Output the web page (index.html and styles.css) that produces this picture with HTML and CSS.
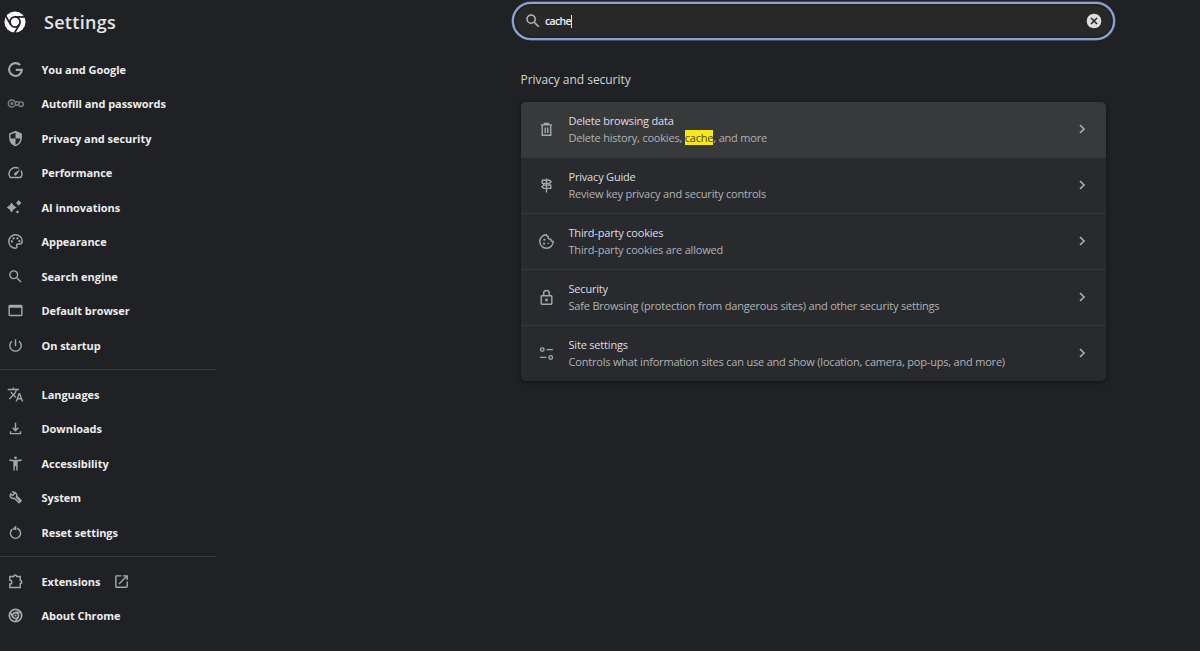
FILE: index.html
```
<!DOCTYPE html>
<html lang="en">
<head>
<meta charset="utf-8">
<title>Settings</title>
<link rel="stylesheet" href="styles.css">
</head>
<body>
<div class="app">
  <aside class="sidebar">
    <header class="brand">
      <svg class="logo" viewBox="0 0 24 24"><circle cx="12" cy="12" r="11.500" fill="#fff"/><g fill="none" stroke="#202124" stroke-width="1.900"><circle cx="12" cy="12" r="5.500"/><path d="M12 6.500h11.500"/><path d="M12 6.500h11.500" transform="rotate(120 12 12)"/><path d="M12 6.500h11.500" transform="rotate(240 12 12)"/></g></svg>
      <h1 class="title">Settings</h1>
    </header>
    <nav class="menu">
      <a class="item"><svg class="icon" viewBox="0 0 24 24"><path class="line thick" d="M18.600 5.800A9 9 0 1 0 21 12.600h-8.600"/></svg><span>You and Google</span></a>
      <a class="item"><svg class="icon dim" viewBox="0 0 24 24"><g class="line"><circle cx="6.800" cy="12" r="5"/><circle cx="6.800" cy="12" r="1.200"/><path d="M11.500 9.500h5M12 14h4"/><circle cx="19.800" cy="13" r="3.300"/></g></svg><span>Autofill and passwords</span></a>
      <a class="item"><svg class="icon" viewBox="0 0 24 24"><path d="M12 1L3 5v6c0 5.550 3.840 10.740 9 12 5.160-1.260 9-6.450 9-12V5l-9-4zm0 3v8h7c-.53 4.120-3.280 7.790-7 8.900V12H5V6.300z"/></svg><span>Privacy and security</span></a>
      <a class="item"><svg class="icon" viewBox="0 0 24 24"><path d="M20.380 8.570l-1.230 1.850a8 8 0 0 1-.22 7.580H5.070A8 8 0 0 1 15.580 6.850l1.850-1.230A10 10 0 0 0 3.350 19a2 2 0 0 0 1.720 1h13.850a2 2 0 0 0 1.740-1 10 10 0 0 0-.27-10.440zm-9.790 6.840a2 2 0 0 0 2.830 0l5.660-8.490-8.490 5.660a2 2 0 0 0 0 2.830z"/></svg><span>Performance</span></a>
      <a class="item"><svg class="icon" viewBox="0 0 24 24"><path d="M6.500 6.500q1.800 3.700 5.500 5.500-3.700 1.800-5.500 5.500Q4.700 13.800 1 12q3.700-1.800 5.500-5.500z" stroke="currentColor" stroke-width="1.500"/><path d="M16.500 2.200l3.300 3.300-3.300 3.300-3.300-3.300z" stroke="currentColor" stroke-linejoin="round"/><path d="M14.800 16l2.300 2.300-2.300 2.300-2.300-2.300z"/></svg><span>AI innovations</span></a>
      <a class="item"><svg class="icon" viewBox="0 0 24 24"><path class="line" d="M12 2.500a9.500 9.500 0 1 0 0 19c2 0 2.600-1.700 1.800-3-.9-1.500.1-3 1.700-3h2.500c2 0 3.500-1.500 3.500-4.200C21.500 6.300 17 2.500 12 2.500z"/><circle cx="6.800" cy="12" r="1.600"/><circle cx="9.300" cy="7.700" r="1.600"/><circle cx="14.700" cy="7.700" r="1.600"/><circle cx="17.500" cy="11.500" r="1.600"/></svg><span>Appearance</span></a>
      <a class="item"><svg class="icon" viewBox="0 0 24 24"><path d="M15.500 14h-.79l-.28-.27A6.470 6.470 0 0 0 16 9.500 6.500 6.500 0 1 0 9.500 16c1.610 0 3.090-.59 4.230-1.570l.27.28v.79l5 4.990L20.490 19l-4.990-5zm-6 0C7.010 14 5 11.990 5 9.500S7.010 5 9.500 5 14 7.010 14 9.500 11.990 14 9.500 14z"/></svg><span>Search engine</span></a>
      <a class="item"><svg class="icon" viewBox="0 0 24 24"><path d="M20 4H4a2 2 0 0 0-2 2v12c0 1.100.9 2 2 2h16c1.100 0 2-.9 2-2V6a2 2 0 0 0-2-2zm0 14H4V8h16v10z"/></svg><span>Default browser</span></a>
      <a class="item"><svg class="icon" viewBox="0 0 24 24"><path d="M13 3h-2v10h2V3zm4.830 2.170l-1.420 1.420A6.920 6.920 0 0 1 19 12a7 7 0 1 1-11.420-5.420L6.170 5.170A8.930 8.930 0 0 0 3 12a9 9 0 0 0 18 0c0-2.740-1.230-5.180-3.170-6.830z"/></svg><span>On startup</span></a>
      <hr class="rule">
      <a class="item"><svg class="icon" viewBox="0 0 24 24"><path d="M12.870 15.070l-2.540-2.510.03-.03A17.520 17.520 0 0 0 14.070 6H17V4h-7V2H8v2H1v1.990h11.170C11.500 7.920 10.440 9.750 9 11.350 8.070 10.320 7.300 9.190 6.690 8h-2c.73 1.630 1.730 3.170 2.980 4.560l-5.090 5.020L4 19l5-5 3.110 3.110.76-2.040zM18.500 10h-2L12 22h2l1.120-3h4.750L21 22h2l-4.500-12zm-2.620 7l1.620-4.330L19.120 17h-3.240z"/></svg><span>Languages</span></a>
      <a class="item"><svg class="icon" viewBox="0 0 24 24"><path class="line" d="M12 4v10.500M8 11l4 4 4-4M5 16v3.200h14V16"/></svg><span>Downloads</span></a>
      <a class="item"><svg class="icon" viewBox="0 0 24 24"><path d="M20.500 6c-2.610.7-5.670 1-8.500 1s-5.890-.3-8.500-1L3 8c1.860.5 4 .83 6 1v13h2v-6h2v6h2V9c2-.17 4.140-.5 6-1l-.5-2zM12 6a2 2 0 1 0 0-4 2 2 0 0 0 0 4z"/></svg><span>Accessibility</span></a>
      <a class="item"><svg class="icon" viewBox="0 0 24 24"><path class="line" d="M8.500 4.200L10.700 6.500 8 9.200 5.200 6.900C3.700 9 4.500 11.700 6.500 12.800c1.300.7 2.500.7 3.700.3l6.800 6.300 3-3-6.300-6c.8-3.500-1.700-6.200-5.200-6.200zM12.500 10.500l5.500 6.500"/></svg><span>System</span></a>
      <a class="item"><svg class="icon" viewBox="0 0 24 24"><path class="line" d="M7.300 7.600A7.200 7.200 0 1 0 16.700 7.600M8 7.500L12 6M14 5.800l3 2.100"/><path d="M13 2v7.500L9 5.800z"/></svg><span>Reset settings</span></a>
      <hr class="rule">
      <a class="item"><svg class="icon" viewBox="0 0 24 24"><path class="line" d="M4 5h5.700c0-3 4-3 4 0h5v5.500c3 0 3 4.300 0 4.300V20.500H4v-5c3.800 0 3.800-5.200 0-5.200z"/></svg><span>Extensions</span><svg class="icon external" viewBox="0 0 24 24"><path d="M19 19H5V5h7V3H5a2 2 0 0 0-2 2v14c0 1.100.89 2 2 2h14c1.100 0 2-.9 2-2v-7h-2v7zM14 3v2h3.590l-9.830 9.830 1.410 1.410L19 6.410V10h2V3h-7z"/></svg></a>
      <a class="item"><svg class="icon" viewBox="0 0 24 24"><g class="line about"><circle cx="12" cy="12" r="8.700"/><circle cx="12" cy="12" r="4.200"/><path d="M12 7.700h8M8.300 14.200L4.300 7.300M15.700 14.200L11.700 21"/></g><circle cx="12" cy="12" r="1.500"/></svg><span>About Chrome</span></a>
    </nav>
  </aside>
  <main class="content">
    <div class="search">
      <svg class="search-icon" viewBox="0 0 24 24"><path d="M15.500 14h-.79l-.28-.27A6.470 6.470 0 0 0 16 9.500 6.500 6.500 0 1 0 9.500 16c1.610 0 3.090-.59 4.230-1.570l.27.28v.79l5 4.990L20.490 19l-4.990-5zm-6 0C7.010 14 5 11.990 5 9.500S7.010 5 9.500 5 14 7.010 14 9.500 11.990 14 9.500 14z"/></svg>
      <span class="query">cache</span><i class="caret"></i>
      <svg class="clear" viewBox="0 0 24 24"><circle cx="12" cy="12" r="11"/><path d="M7.500 7.500l9 9M16.500 7.500l-9 9"/></svg>
    </div>
    <h2 class="section">Privacy and security</h2>
    <section class="card">
      <div class="row hovered"><svg class="icon" viewBox="0 0 24 24"><path class="line" d="M6 6.500V20h12V6.500M4 5.500h16M9 5V3.500h6V5M10.200 9v8M13.800 9v8"/></svg><div class="text"><div class="name">Delete browsing data</div><div class="desc">Delete history, cookies, <mark>cache</mark>, and more</div></div><svg class="chevron" viewBox="0 0 8 12"><path d="M2 2l4 4-4 4"/></svg></div>
      <div class="row"><svg class="icon" viewBox="0 0 24 24"><path class="line" d="M12 2v20M6 4.500h10l2.500 2.200L16 9H6zM18 11.500H8l-2.500 2.300L8 16h10z"/><path class="line" d="M8 9v2.500M16 9v2.500"/></svg><div class="text"><div class="name">Privacy Guide</div><div class="desc">Review key privacy and security controls</div></div><svg class="chevron" viewBox="0 0 8 12"><path d="M2 2l4 4-4 4"/></svg></div>
      <div class="row"><svg class="icon" viewBox="0 0 24 24"><path class="line" d="M12 2.500a9.500 9.500 0 1 0 9.500 9.500c-2.300 0-3.500-1.300-3.500-3.200-2.600.2-3.900-1.200-3.600-3.500C12.700 5 12 4 12 2.500z"/><circle cx="9" cy="9.500" r="1.500"/><circle cx="8.500" cy="15" r="1.500"/><circle cx="14.500" cy="14.500" r="1.100"/></svg><div class="text"><div class="name">Third-party cookies</div><div class="desc">Third-party cookies are allowed</div></div><svg class="chevron" viewBox="0 0 8 12"><path d="M2 2l4 4-4 4"/></svg></div>
      <div class="row"><svg class="icon" viewBox="0 0 24 24"><g class="line"><rect x="4.500" y="9.500" width="15" height="12" rx="1"/><path d="M8 9.500V6a4 4 0 0 1 8 0v3.500"/></g><circle cx="12" cy="15.500" r="2"/></svg><div class="text"><div class="name">Security</div><div class="desc">Safe Browsing (protection from dangerous sites) and other security settings</div></div><svg class="chevron" viewBox="0 0 8 12"><path d="M2 2l4 4-4 4"/></svg></div>
      <div class="row"><svg class="icon" viewBox="0 0 24 24"><g class="line"><circle cx="6" cy="6.500" r="2.500"/><path d="M12 6.500h9M3 17.500h9"/><circle cx="18" cy="17.500" r="2.500"/></g></svg><div class="text"><div class="name">Site settings</div><div class="desc">Controls what information sites can use and show (location, camera, pop-ups, and more)</div></div><svg class="chevron" viewBox="0 0 8 12"><path d="M2 2l4 4-4 4"/></svg></div>
    </section>
  </main>
</div>
</body>
</html>
```
FILE: styles.css
```
* { box-sizing: border-box; }
body {
  margin: 0;
  background: #202124;
  color: #e3e4e6;
  font-family: "Open Sans", "Noto Sans", sans-serif;
  font-size: 11px;
  overflow: hidden;
}
svg { display: block; flex: none; fill: currentColor; }
.app { display: flex; height: 651px; }
.sidebar { width: 216px; flex: none; }
.brand { display: flex; align-items: center; height: 51.750px; padding: 0 0 8px 4px; }
.logo { width: 22px; height: 22px; }
.title { margin: 0 0 0 18px; font-size: 18px; font-weight: 600; line-height: 24px; letter-spacing: .3px; }
.item { display: flex; align-items: center; height: 34.500px; padding-left: 7px; font-weight: 700; letter-spacing: -.05px; color: #eceded; white-space: nowrap; }
.item span { margin-left: 17.500px; }
.icon { width: 17px; height: 17px; color: #a4a7ab; }
.dim { color: #7e8185; }
.line { fill: none; stroke: currentColor; stroke-width: 2; }
.thick { stroke-width: 3; }
.about { stroke-width: 2.400; }
.icon.external { margin-left: 13px; }
.rule { height: 1px; margin: 7px 0 6.500px; border: 0; background: #35373a; }
.content { width: 603px; margin-left: 296px; padding-top: 2px; }
.search {
  display: flex; align-items: center;
  height: 38px; padding: 0 11px 0 10px;
  border: 2px solid #8ca3d2; border-radius: 20px;
  background: #282828;
  box-shadow: inset 0 0 0 2px #202124, 0 0 0 .5px #6479a3;
}
.search-icon { width: 18px; height: 18px; color: #b5b6b8; }
.query { margin-left: 3px; font-weight: 600; font-size: 10.500px; letter-spacing: -.7px; color: #eee; }
.caret { width: 1px; height: 13px; background: #ddd; }
.clear { width: 16px; height: 16px; margin-left: auto; color: #ddd; }
.clear path { stroke: #282828; stroke-width: 2.500; }
.section { margin: 30px 0 12.500px 8.500px; font-size: 12px; line-height: 19px; font-weight: 400; letter-spacing: -.04px; color: #d4d5d7; }
.card { width: 585.500px; margin-left: 8.500px; border-radius: 5px; background: #292a2d; box-shadow: 0 1px 3px 1px #17181a; overflow: hidden; }
.row { display: flex; align-items: center; height: 56px; padding: 0 20px 0 17.500px; border-bottom: 1px solid #35373a; }
.row:last-child { height: 55px; border-bottom: 0; }
.hovered { background: #38393b; }
.text { margin-left: 13.500px; line-height: 17px; letter-spacing: -.19px; white-space: nowrap; }
.name { color: #dedfe1; }
.desc { color: #b1b3b6; letter-spacing: -.2px; }
mark { background: #f8e71c; color: #4b4713; }
.chevron { width: 8px; height: 12px; margin-left: auto; fill: none; stroke: #aaadb0; stroke-width: 1.700; }
```
